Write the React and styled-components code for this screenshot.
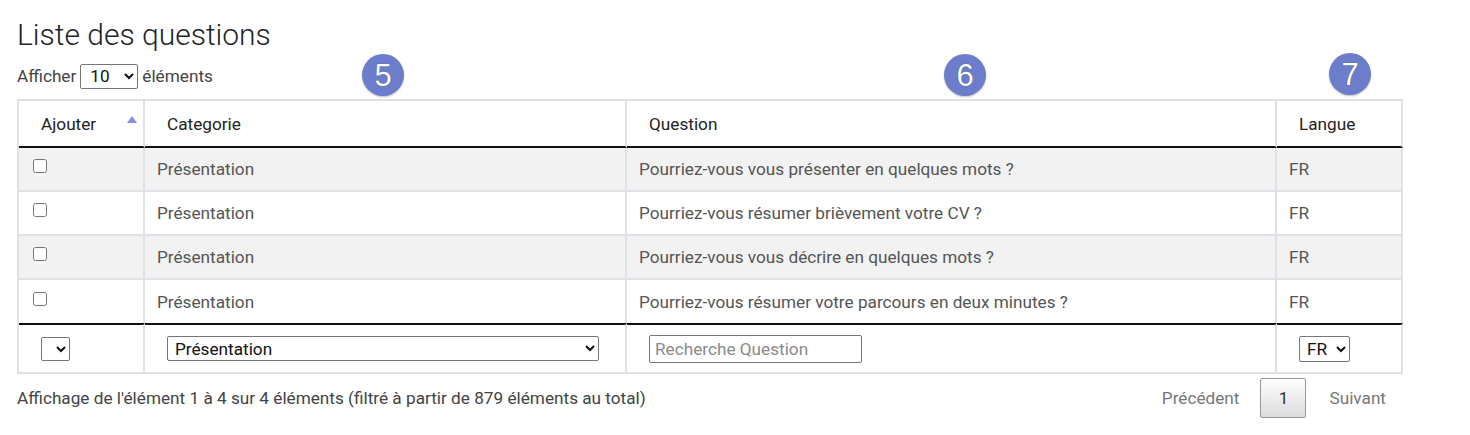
import React from "react";
import styled, { createGlobalStyle } from "styled-components";

const Global = createGlobalStyle`
  *, *::before, *::after { box-sizing: border-box; }
  body { margin: 0; background: #fff; font-family: Roboto, "Noto Sans", Arial, sans-serif; color: #333; }
`;

const Page = styled.div`
  position: relative;
  width: 1470px;
  padding: 17px 17px 0;
`;

const Title = styled.h2`
  margin: 0;
  font-size: 30px;
  line-height: 36px;
  font-weight: 300;
  color: #212529;
`;

const LengthBar = styled.div`
  margin-top: 10px;
  height: 26px;
  display: flex;
  align-items: center;
  gap: 4px;
  font-size: 17.2px;
  color: #444;
`;

const NativeSelect = styled.select`
  width: ${(p) => p.$w}px;
  height: ${(p) => p.$h}px;
  font-family: Roboto, Arial, sans-serif;
  font-size: 17.2px;
  color: #111;
  background: #fff;
  border: 1px solid #767676;
  border-radius: 2px;
  padding: 0 0 0 ${(p) => p.$pl ?? 3}px;
  margin: 0;
`;

const TextInput = styled.input`
  width: 213px;
  height: 28px;
  font-family: Roboto, Arial, sans-serif;
  font-size: 17.2px;
  border: 1px solid #767676;
  border-radius: 2px;
  padding: 1px 5px;
  margin: 0;
  &::placeholder { color: #8a8a8a; }
`;

const Table = styled.table`
  margin-top: 10px;
  width: 1386px;
  table-layout: fixed;
  border-collapse: separate;
  border-spacing: 0;
  border-top: 2px solid #dee2e6;
  border-left: 2px solid #dee2e6;
  font-size: 17.2px;
`;

const Th = styled.th`
  position: relative;
  width: ${(p) => p.$w}px;
  height: 47px;
  padding: 0 22px;
  text-align: left;
  font-weight: 400;
  color: #222;
  border-right: 2px solid #dee2e6;
  border-bottom: 2px solid #111;
`;

const SortArrow = styled.span`
  position: absolute;
  right: 6px;
  top: 15px;
  width: 0;
  height: 0;
  border-left: 5px solid transparent;
  border-right: 5px solid transparent;
  border-bottom: 7px solid #8a8ee0;
`;

const Row = styled.tr`
  background: ${(p) => (p.$striped ? "#f2f2f2" : "#fff")};
`;

const Td = styled.td`
  height: ${(p) => (p.$last ? 43 : 44)}px;
  padding: 0 12px;
  padding-left: ${(p) => p.$pl ?? 12}px;
  color: #555;
  border-right: 2px solid #dee2e6;
  border-bottom: ${(p) => (p.$last ? "none" : "2px solid #dee2e6")};
`;

const Check = styled.input`
  display: block;
  margin: 0;
  width: 14px;
  height: 14px;
  position: relative;
  top: -3px;
`;

const FootTd = styled.td`
  height: 51px;
  padding: 0 22px;
  border-top: 2px solid #111;
  border-right: 2px solid #dee2e6;
  border-bottom: 2px solid #dee2e6;
`;

const BottomBar = styled.div`
  width: 1386px;
  margin-top: 4px;
  display: flex;
  align-items: center;
  justify-content: space-between;
`;

const Info = styled.div`
  font-size: 17.2px;
  color: #444;
`;

const Pager = styled.div`
  display: flex;
  align-items: center;
  gap: 21px;
  padding-right: 17px;
`;

const PageLink = styled.span`
  font-size: 17.2px;
  line-height: 22px;
  color: #777;
`;

const CurrentPage = styled.span`
  width: 46px;
  height: 40px;
  display: flex;
  align-items: center;
  justify-content: center;
  font-size: 17.2px;
  color: #333;
  border: 1px solid #979797;
  border-radius: 2px;
  background: linear-gradient(to bottom, #fff 0%, #dcdcdc 100%);
  margin-right: 2px;
`;

const Badge = styled.div`
  position: absolute;
  left: ${(p) => p.$x - 21}px;
  top: ${(p) => p.$y - 21}px;
  width: 42px;
  height: 42px;
  border-radius: 50%;
  background: #6c7ecb;
  box-shadow: 0 1px 2px rgba(0, 0, 0, 0.25);
  display: flex;
  align-items: center;
  justify-content: center;
  color: #fff;
  font-family: "Liberation Sans", Arial, sans-serif;
  font-size: 31px;
  line-height: 1;
  text-shadow: 0 0 1px rgba(50, 50, 80, 0.9);
`;

const rows = [
  "Pourriez-vous vous présenter en quelques mots ?",
  "Pourriez-vous résumer brièvement votre CV ?",
  "Pourriez-vous vous décrire en quelques mots ?",
  "Pourriez-vous résumer votre parcours en deux minutes ?",
];

export default function App() {
  return (
    <>
      <Global />
      <Page>
        <Title>Liste des questions</Title>
        <LengthBar>
          Afficher
          <NativeSelect $w={58} $h={25} $pl={5} defaultValue="10">
            <option>10</option>
            <option>25</option>
            <option>50</option>
          </NativeSelect>
          éléments
        </LengthBar>
        <Table>
          <thead>
            <tr>
              <Th $w={126}>
                Ajouter
                <SortArrow />
              </Th>
              <Th $w={482}>Categorie</Th>
              <Th $w={650}>Question</Th>
              <Th $w={126}>Langue</Th>
            </tr>
          </thead>
          <tbody>
            {rows.map((q, i) => (
              <Row key={i} $striped={i % 2 === 0}>
                <Td $pl={14} $last={i === rows.length - 1}>
                  <Check type="checkbox" />
                </Td>
                <Td $last={i === rows.length - 1}>Présentation</Td>
                <Td $last={i === rows.length - 1}>{q}</Td>
                <Td $last={i === rows.length - 1}>FR</Td>
              </Row>
            ))}
          </tbody>
          <tfoot>
            <tr>
              <FootTd>
                <NativeSelect $w={29} $h={24}>
                  <option></option>
                </NativeSelect>
              </FootTd>
              <FootTd>
                <NativeSelect $w={432} $h={25} defaultValue="Présentation">
                  <option>Présentation</option>
                </NativeSelect>
              </FootTd>
              <FootTd>
                <TextInput placeholder="Recherche Question" />
              </FootTd>
              <FootTd>
                <NativeSelect $w={51} $h={26} defaultValue="FR">
                  <option>FR</option>
                  <option>EN</option>
                </NativeSelect>
              </FootTd>
            </tr>
          </tfoot>
        </Table>
        <BottomBar>
          <Info>
            Affichage de l'élément 1 à 4 sur 4 éléments (filtré à partir de 879 éléments au total)
          </Info>
          <Pager>
            <PageLink>Précédent</PageLink>
            <CurrentPage>1</CurrentPage>
            <PageLink>Suivant</PageLink>
          </Pager>
        </BottomBar>
        <Badge $x={383} $y={75}>5</Badge>
        <Badge $x={965} $y={75}>6</Badge>
        <Badge $x={1350} $y={74}>7</Badge>
      </Page>
    </>
  );
}
